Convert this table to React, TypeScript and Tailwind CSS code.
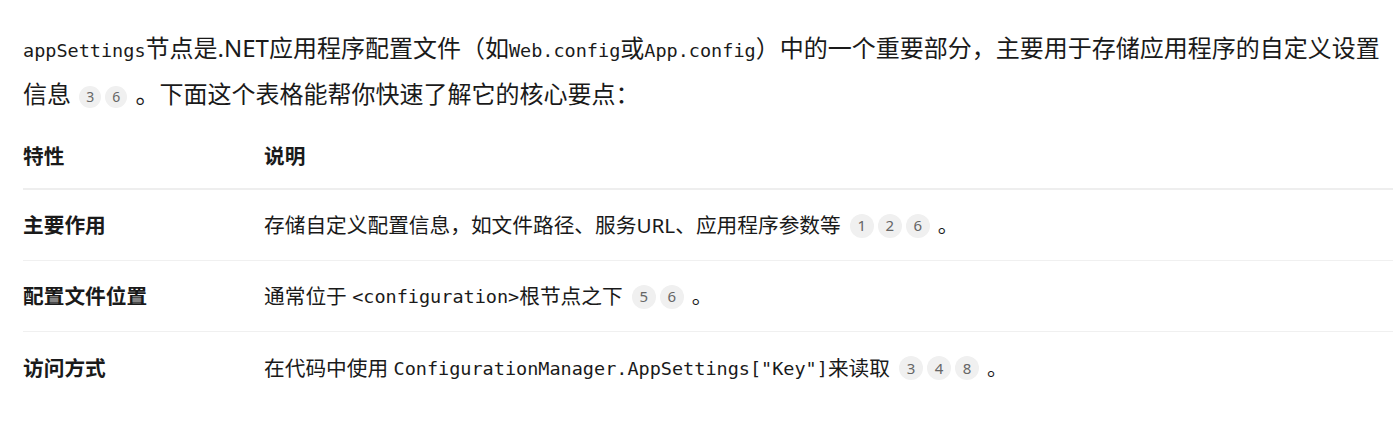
const rows = [
  {
    name: '主要作用',
    parts: [{ t: '存储自定义配置信息，如文件路径、服务URL、应用程序参数等' }],
    refs: ['1', '2', '6'],
  },
  {
    name: '配置文件位置',
    parts: [{ t: '通常位于 ' }, { t: '<configuration>', code: true }, { t: '根节点之下' }],
    refs: ['5', '6'],
  },
  {
    name: '访问方式',
    parts: [{ t: '在代码中使用 ' }, { t: 'ConfigurationManager.AppSettings["Key"]', code: true }, { t: '来读取' }],
    refs: ['3', '4', '8'],
  },
];

function Ref({ n, size = 'sm' }: { n: string; size?: 'sm' | 'md' }) {
  return (
    <span
      className={`inline-flex items-center justify-center rounded-full bg-[#f0f0f0] align-middle font-['Noto_Sans',sans-serif] leading-none text-[#666] ${
        size === 'md' ? 'size-[24px] text-[15px]' : 'mx-[2px] size-[22px] text-[14px]'
      }`}
    >
      {n}
    </span>
  );
}

function Code({ children }: { children: string }) {
  return <code className="font-['DejaVu_Sans_Mono',monospace] text-[18.5px]">{children}</code>;
}

export default function App() {
  return (
    <div className="min-h-[423px] bg-white px-[23px] pt-[26px] font-['Noto_Sans','Noto_Sans_CJK_SC',sans-serif] text-[#1a1a1a]">
      <p className="w-[1370px] text-[24px] leading-[43px]">
        <Code>appSettings</Code>节点是.NET应用程序配置文件（如<Code>Web.config</Code>或<Code>App.config</Code>
        ）中的一个重要部分，主要用于存储应用程序的自定义设置信息 <Ref n="3" />
        <Ref n="6" /> 。下面这个表格能帮你快速了解它的核心要点：
      </p>

      <div className="mt-[10px] w-[1370px] text-[20.7px]">
        <div className="flex h-[65px] items-center border-b-2 border-[#eeeeee] font-bold">
          <div className="w-[241px]">特性</div>
          <div>说明</div>
        </div>
        {rows.map((row, i) => (
          <div
            key={row.name}
            className={`flex h-[71px] items-center ${i < rows.length - 1 ? 'border-b border-[#f0f0f0]' : ''}`}
          >
            <div className="w-[241px] pt-[2px] font-bold">{row.name}</div>
            <div className="flex items-center whitespace-pre pt-[2px]">
              {row.parts.map((p, j) => (p.code ? <Code key={j}>{p.t}</Code> : <span key={j}>{p.t}</span>))}
              <span className="ml-[9px] flex gap-[4px]">
                {row.refs.map((r) => (
                  <Ref key={r} n={r} size="md" />
                ))}
              </span>
              <span className="ml-[8px]">。</span>
            </div>
          </div>
        ))}
      </div>
    </div>
  );
}
